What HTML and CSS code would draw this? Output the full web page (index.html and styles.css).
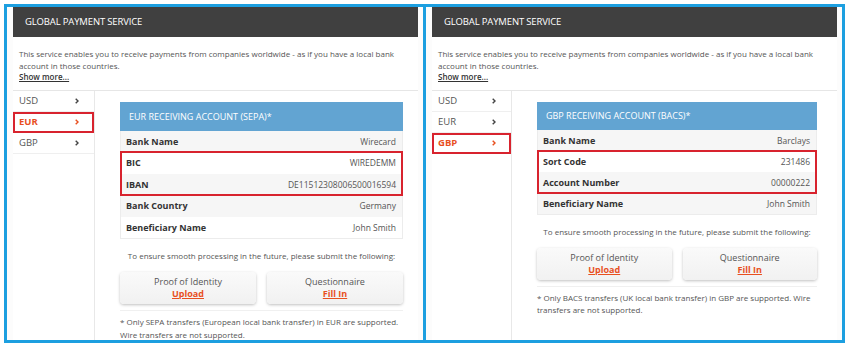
FILE: index.html
```html
<!DOCTYPE html>
<html lang="en">
  <head>
    <meta charset="UTF-8" />
    <title>Global Payment Service</title>
    <link rel="stylesheet" href="styles.css">
  </head>
  <body>
    <div class="board">
      <!-- EUR panel -->
      <div class="panel panel-left">
        <div class="card-head">GLOBAL PAYMENT SERVICE</div>
        <div class="intro">
          <p>This service enables you to receive payments from companies worldwide - as if you have a local bank account in those countries.</p>
          <a href="#" class="more">Show more...</a>
        </div>
        <div class="card-body">
          <ul class="nav">
            <li>USD <svg class="chev" viewBox="0 0 4 6"><polyline points="0.7,0.7 3,3 0.7,5.3" /></svg></li>
            <li class="active marked">EUR <svg class="chev" viewBox="0 0 4 6"><polyline points="0.7,0.7 3,3 0.7,5.3" /></svg></li>
            <li>GBP <svg class="chev" viewBox="0 0 4 6"><polyline points="0.7,0.7 3,3 0.7,5.3" /></svg></li>
          </ul>
          <div class="content">
            <div class="acc-head">EUR RECEIVING ACCOUNT (SEPA)*</div>
            <div class="acc-table">
              <div class="row"><span class="lbl">Bank Name</span><span>Wirecard</span></div>
              <div class="marked-group">
                <div class="row"><span class="lbl">BIC</span><span>WIREDEMM</span></div>
                <div class="row"><span class="lbl">IBAN</span><span>DE11512308006500016594</span></div>
              </div>
              <div class="row"><span class="lbl">Bank Country</span><span>Germany</span></div>
              <div class="row"><span class="lbl">Beneficiary Name</span><span>John Smith</span></div>
            </div>
            <p class="ask">To ensure smooth processing in the future, please submit the following:</p>
            <div class="docs">
              <div class="doc">Proof of Identity<a href="#">Upload</a></div>
              <div class="doc">Questionnaire<a href="#">Fill In</a></div>
            </div>
            <p class="note">* Only SEPA transfers (European local bank transfer) in EUR are supported. Wire transfers are not supported.</p>
          </div>
        </div>
      </div>

      <!-- GBP panel -->
      <div class="panel panel-right">
        <div class="card-head">GLOBAL PAYMENT SERVICE</div>
        <div class="intro">
          <p>This service enables you to receive payments from companies worldwide - as if you have a local bank account in those countries.</p>
          <a href="#" class="more">Show more...</a>
        </div>
        <div class="card-body">
          <ul class="nav">
            <li>USD <svg class="chev" viewBox="0 0 4 6"><polyline points="0.7,0.7 3,3 0.7,5.3" /></svg></li>
            <li>EUR <svg class="chev" viewBox="0 0 4 6"><polyline points="0.7,0.7 3,3 0.7,5.3" /></svg></li>
            <li class="active marked">GBP <svg class="chev" viewBox="0 0 4 6"><polyline points="0.7,0.7 3,3 0.7,5.3" /></svg></li>
          </ul>
          <div class="content">
            <div class="acc-head">GBP RECEIVING ACCOUNT (BACS)*</div>
            <div class="acc-table">
              <div class="row"><span class="lbl">Bank Name</span><span>Barclays</span></div>
              <div class="marked-group">
                <div class="row"><span class="lbl">Sort Code</span><span>231486</span></div>
                <div class="row"><span class="lbl">Account Number</span><span>00000222</span></div>
              </div>
              <div class="row"><span class="lbl">Beneficiary Name</span><span>John Smith</span></div>
            </div>
            <p class="ask">To ensure smooth processing in the future, please submit the following:</p>
            <div class="docs">
              <div class="doc">Proof of Identity<a href="#">Upload</a></div>
              <div class="doc">Questionnaire<a href="#">Fill In</a></div>
            </div>
            <p class="note">* Only BACS transfers (UK local bank transfer) in GBP are supported. Wire transfers are not supported.</p>
          </div>
        </div>
      </div>
    </div>
  </body>
</html>
```
FILE: styles.css
```css
* {
  margin: 0;
  padding: 0;
  box-sizing: border-box;
  font-family: 'Open Sans', 'Liberation Sans', sans-serif;
}

body {
  background: #ffffff;
  width: 847px;
  height: 347px;
  overflow: hidden;
}

.board {
  display: flex;
  width: 841px;
  height: 339px;
  margin: 4px 0 0 4px;
  border: 3px solid #1c9fe0;
  background: #fcfcfc;
}

.panel {
  display: flex;
  flex-direction: column;
  overflow: hidden;
}

.panel-left {
  width: 419px;
  border-right: 3px solid #1c9fe0;
  padding: 0 5px 0 6px;
}

.panel-right {
  flex: 1;
  padding: 0 5px 0 6px;
}

.card-head {
  height: 30px;
  background: #404040;
  color: #ffffff;
  font-size: 9.5px;
  line-height: 30px;
  padding-left: 12px;
  letter-spacing: -0.15px;
}

.intro {
  background: #ffffff;
  padding: 11px 6px 7px 6px;
  font-size: 8px;
  line-height: 11.5px;
  color: #555555;
  border-bottom: 1px solid #e6e6e6;
}

.intro .more {
  color: #333333;
  font-weight: 600;
  text-decoration: underline;
}

.card-body {
  flex: 1;
  display: flex;
  background: #ffffff;
}

.nav {
  list-style: none;
  width: 82px;
  border-right: 1px solid #e8e8e8;
}

.panel-right .nav {
  width: 80px;
}

.nav li {
  height: 21px;
  display: flex;
  align-items: center;
  justify-content: space-between;
  padding: 0 15px 0 6px;
  font-size: 9.5px;
  color: #555555;
  border-bottom: 1px solid #efefef;
}

.chev {
  width: 4px;
  height: 6px;
  fill: none;
  stroke: #444444;
  stroke-width: 1.4;
}

.nav li.active {
  color: #e8501f;
  font-weight: 700;
}

.nav li.active .chev {
  stroke: #e8501f;
}

.marked {
  outline: 2px solid #d8232e;
  outline-offset: -2px;
}

.content {
  flex: 1;
  padding: 11px 15px 0 25px;
}

.panel-right .content {
  padding: 11px 20px 0 25px;
}

.acc-head {
  height: 29px;
  background: #62a4d2;
  color: #ffffff;
  font-size: 9px;
  line-height: 29px;
  padding-left: 9px;
}

.panel-right .acc-head {
  height: 28px;
  line-height: 28px;
}

.acc-table {
  border: 1px solid #ececec;
  border-top: none;
}

.row {
  height: 21.5px;
  display: flex;
  align-items: center;
  justify-content: space-between;
  padding: 0 6px 0 5px;
  font-size: 8.5px;
  color: #555555;
  background: #ffffff;
}

.panel-right .row {
  height: 21px;
}

.acc-table > .row:nth-child(odd) {
  background: #f6f6f6;
}

.marked-group .row:nth-child(2) {
  background: #f6f6f6;
}

.lbl {
  color: #333333;
  font-weight: 700;
  font-size: 9px;
}

.marked-group {
  outline: 2px solid #d8232e;
  outline-offset: -1px;
}

.ask {
  margin-top: 11px;
  text-align: center;
  font-size: 8px;
  line-height: 12px;
  color: #555555;
}

.docs {
  display: flex;
  gap: 11px;
  margin-top: 10px;
}

.doc {
  flex: 1;
  height: 32px;
  display: flex;
  flex-direction: column;
  align-items: center;
  justify-content: center;
  background: linear-gradient(#fafafa, #f1f1f1);
  border-radius: 4px;
  box-shadow: 0 1px 3px rgba(0,0,0,0.25);
  font-size: 9px;
  line-height: 12px;
  color: #555555;
}

.doc a {
  color: #e8501f;
  font-weight: 700;
  text-decoration: underline;
}

.note {
  margin-top: 6px;
  padding-top: 5px;
  border-top: 1px solid #f0f0f0;
  font-size: 8px;
  line-height: 12.5px;
  color: #555555;
}
```
